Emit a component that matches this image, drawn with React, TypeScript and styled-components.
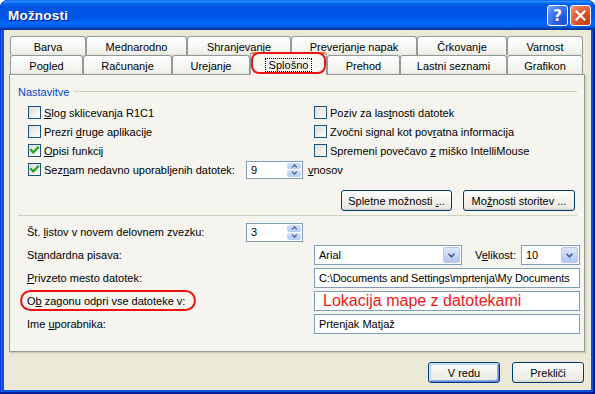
import React from 'react';
import styled, { createGlobalStyle } from 'styled-components';

const Global = createGlobalStyle`
  html, body { margin: 0; padding: 0; background: #ffffff; }
  body { font-family: "Liberation Sans", Arial, sans-serif; font-size: 11px; color: #000; }
  * { box-sizing: border-box; }
`;

const Window = styled.div`
  width: 595px;
  height: 394px;
  display: flex;
  flex-direction: column;
  background: #0855dd;
  border-radius: 8px 8px 0 0;
  overflow: hidden;
  box-shadow: inset -1px -1px #00138c, inset 1px 1px #0831d9, inset -2px -2px #001ea0, inset 2px 2px #166aee;
`;

const TitleBar = styled.div`
  height: 30px;
  flex: none;
  display: flex;
  align-items: center;
  justify-content: space-between;
  padding: 0 4px 0 8px;
  border-radius: 8px 8px 0 0;
  background: linear-gradient(180deg, #0058ee 0%, #3593ff 4%, #288eff 6%, #127dff 8%, #036ffc 10%, #0262ee 14%, #0057e5 20%, #0054e3 24%, #0055eb 56%, #005bf5 66%, #026afe 76%, #0062ef 86%, #0052d6 92%, #0040ab 94%, #003092 100%);
`;

const TitleText = styled.span`
  font-family: "Liberation Sans", Arial, sans-serif;
  font-weight: bold;
  font-size: 13.5px;
  color: #fff;
  text-shadow: 1px 1px #0f1089;
  letter-spacing: 0.2px;
`;

const Controls = styled.div`
  display: flex;
  gap: 2px;
  margin-top: 1px;
`;

const CtrlButton = styled.div<{ $kind: 'help' | 'close' }>`
  width: 21px;
  height: 21px;
  border: 1px solid #fff;
  border-radius: 3px;
  display: flex;
  align-items: center;
  justify-content: center;
  color: #fff;
  font-family: "DejaVu Sans", sans-serif;
  font-weight: bold;
  font-size: 15px;
  background: ${p => p.$kind === 'close'
    ? 'radial-gradient(circle at 85% 85%, #c73d0b 0%, #d8542a 45%, #e77b57 80%, #f1a58c 100%)'
    : 'radial-gradient(circle at 85% 85%, #1a4fd6 0%, #2c66e8 45%, #5b8ef7 80%, #8fb4fb 100%)'};
`;

const Body = styled.div`
  flex: 1;
  margin: 0 4px 4px 4px;
  background: #ece9d8;
  padding: 6px 6px 7px 5px;
  display: flex;
  flex-direction: column;
`;

const TabRow = styled.div`
  display: flex;
  height: 19px;
  padding-left: 1px;
`;

const Tab = styled.div<{ $w: number; $selected?: boolean }>`
  width: ${p => p.$w}px;
  height: ${p => (p.$selected ? 23 : 19)}px;
  margin-top: ${p => (p.$selected ? -3 : 0)}px;
  position: ${p => (p.$selected ? 'relative' : 'static')};
  z-index: ${p => (p.$selected ? 3 : 'auto')};
  border: 1px solid #919b9c;
  border-bottom: none;
  border-radius: 3px 3px 0 0;
  display: flex;
  align-items: center;
  justify-content: center;
  padding-top: ${p => (p.$selected ? 0 : 1)}px;
  background: ${p => (p.$selected
    ? '#f7f6f1'
    : 'linear-gradient(180deg, #ffffff 0%, #fafaf9 30%, #f0f0ea 90%, #e3e1d6 100%)')};
  ${p => (p.$selected ? 'border-top: 2px solid #e68b2c;' : '')}
`;

const FocusText = styled.span`
  outline: 1px dotted #000;
  padding: 0 3px;
`;

const RedRing = styled.span<{ $t: number; $r: number; $b: number; $l: number; $rad: number }>`
  position: absolute;
  top: ${p => p.$t}px;
  right: ${p => p.$r}px;
  bottom: ${p => p.$b}px;
  left: ${p => p.$l}px;
  border: 2px solid #ee1111;
  border-radius: ${p => p.$rad}px;
  pointer-events: none;
`;

const Panel = styled.div`
  height: 278px;
  border: 1px solid #919b9c;
  background: #f5f4ef;
  padding: 10px 7px 0 8px;
  display: flex;
  flex-direction: column;
  box-shadow: 1px 1px 0 #d0cebf, 2px 2px 0 #e2dfcf;
  position: relative;
  z-index: 1;
`;

const GroupHeader = styled.div`
  display: flex;
  align-items: center;
  gap: 5px;
  height: 13px;
  color: #0046d5;
  &::after {
    content: '';
    flex: 1;
    height: 1px;
    background: #d0d0bf;
  }
`;

const CheckGrid = styled.div`
  margin: 5px 0 0 10px;
  display: grid;
  grid-template-columns: 286px 1fr;
  grid-auto-rows: 19px;
`;

const CheckItem = styled.label<{ $w?: number }>`
  display: flex;
  align-items: center;
  gap: 3px;
  ${p => (p.$w ? `width: ${p.$w}px; flex: none;` : '')}
`;

const Box = styled.span`
  width: 13px;
  height: 13px;
  flex: none;
  border: 1px solid #1c5180;
  background: linear-gradient(135deg, #dcdcd7 0%, #f0f0ea 55%, #ffffff 100%);
  display: flex;
  align-items: center;
  justify-content: center;
`;

const FullRow = styled.div`
  grid-column: 1 / -1;
  display: flex;
  align-items: center;
`;

const Suffix = styled.span`
  margin-left: 5px;
`;

const U = styled.span`
  text-decoration: underline;
`;

const ButtonRow = styled.div<{ $gap: number; $mt: number; $pr: number }>`
  display: flex;
  justify-content: flex-end;
  gap: ${p => p.$gap}px;
  margin-top: ${p => p.$mt}px;
  padding-right: ${p => p.$pr}px;
`;

const Button = styled.div<{ $w: number; $default?: boolean }>`
  width: ${p => p.$w}px;
  height: 21px;
  border: 1px solid #003c74;
  border-radius: 3px;
  display: flex;
  align-items: center;
  justify-content: center;
  white-space: pre;
  background: linear-gradient(180deg, #ffffff 0%, #f4f4f0 40%, #ecebe6 86%, #d6d0c5 100%);
  box-shadow: ${p => (p.$default
    ? 'inset 1px 1px #cee7ff, inset -1px -1px #6982ee, inset 2px 2px #bcd4f6, inset -2px -2px #89ade4'
    : 'none')};
`;

const Separator = styled.div`
  height: 1px;
  background: #d0d0bf;
  margin-top: 4px;
`;

const FormGrid = styled.div`
  margin: 6px 0 0 9px;
  display: grid;
  grid-template-columns: 219px 68px 1fr;
  grid-auto-rows: 20px;
  row-gap: 3px;
`;

const FieldLabel = styled.span<{ $span?: boolean }>`
  grid-column: ${p => (p.$span ? '1 / 3' : '1 / 2')};
  align-self: center;
  position: relative;
  justify-self: start;
`;

const FieldCell = styled.div`
  grid-column: 3 / 4;
  display: flex;
  align-items: center;
`;

const SpinCell = styled.div`
  grid-column: 2 / 3;
  display: flex;
  align-items: center;
`;

const SpinBox = styled.div<{ $h: number }>`
  width: 57px;
  height: ${p => p.$h}px;
  flex: none;
  border: 1px solid #7f9db9;
  background: #fff;
  display: flex;
  align-items: stretch;
`;

const SpinValue = styled.span`
  flex: 1;
  padding-left: 4px;
  display: flex;
  align-items: center;
`;

const SpinButtons = styled.div`
  width: 16px;
  display: flex;
  flex-direction: column;
  gap: 1px;
  padding: 1px;
`;

const SpinBtn = styled.div`
  flex: 1;
  border-radius: 2px;
  background: linear-gradient(180deg, #d4defb 0%, #b9caf6 100%);
  display: flex;
  align-items: center;
  justify-content: center;
`;

const Input = styled.div<{ $w?: number; $red?: boolean; $tight?: boolean }>`
  ${p => (p.$w ? `width: ${p.$w}px; flex: none;` : 'flex: 1;')}
  height: 20px;
  border: 1px solid #7f9db9;
  background: #fff;
  display: flex;
  align-items: center;
  padding-left: ${p => (p.$red ? 8 : 4)}px;
  color: ${p => (p.$red ? '#f01818' : '#000')};
  font-size: ${p => (p.$red ? 16 : 11)}px;
  letter-spacing: ${p => (p.$tight ? '-0.12px' : 'normal')};
  white-space: nowrap;
  overflow: hidden;
`;

const ComboText = styled.span`
  flex: 1;
`;

const ComboArrow = styled.div`
  width: 17px;
  height: 16px;
  margin-right: 1px;
  border-radius: 2px;
  border: 1px solid #b8c9f5;
  background: linear-gradient(180deg, #dde6fd 0%, #c3d3fa 60%, #b2c5f4 100%);
  display: flex;
  align-items: center;
  justify-content: center;
`;

const InlineLabel = styled.span`
  margin: 0 5px 0 13px;
`;

const Check = () => (
  <svg width="11" height="11" viewBox="0 0 11 11">
    <path d="M2 5 L4.3 7.5 L9 2.5" fill="none" stroke="#21a121" strokeWidth="2.2" strokeLinecap="square" />
  </svg>
);

const Chevron = ({ up, size = 7 }: { up?: boolean; size?: number }) => (
  <svg width={size} height={Math.round(size * 0.6)} viewBox="0 0 8 5">
    <path d={up ? 'M1 4.2 L4 1.2 L7 4.2' : 'M1 0.8 L4 3.8 L7 0.8'} fill="none" stroke="#4d6185" strokeWidth="1.6" />
  </svg>
);

const Spinner = ({ value, h }: { value: string; h: number }) => (
  <SpinBox $h={h}>
    <SpinValue>{value}</SpinValue>
    <SpinButtons>
      <SpinBtn><Chevron up size={7} /></SpinBtn>
      <SpinBtn><Chevron size={7} /></SpinBtn>
    </SpinButtons>
  </SpinBox>
);

const Combo = ({ value, w }: { value: string; w: number }) => (
  <Input $w={w}>
    <ComboText>{value}</ComboText>
    <ComboArrow><Chevron size={9} /></ComboArrow>
  </Input>
);

const CheckBox = ({ checked, children, w }: { checked?: boolean; children: React.ReactNode; w?: number }) => (
  <CheckItem $w={w}>
    <Box>{checked ? <Check /> : null}</Box>
    <span>{children}</span>
  </CheckItem>
);

const row1 = [
  ['Barva', 76], ['Mednarodno', 101], ['Shranjevanje', 104], ['Preverjanje napak', 126], ['Črkovanje', 90], ['Varnost', 76],
] as const;
const row2 = [
  ['Pogled', 73], ['Računanje', 89], ['Urejanje', 78], ['Splošno', 77], ['Prehod', 73], ['Lastni seznami', 107], ['Grafikon', 76],
] as const;

export default function App() {
  return (
    <>
      <Global />
      <Window>
        <TitleBar>
          <TitleText>Možnosti</TitleText>
          <Controls>
            <CtrlButton $kind="help">?</CtrlButton>
            <CtrlButton $kind="close">
              <svg width="11" height="11" viewBox="0 0 11 11">
                <path d="M1.5 1.5 L9.5 9.5 M9.5 1.5 L1.5 9.5" stroke="#fff" strokeWidth="2.2" strokeLinecap="square" />
              </svg>
            </CtrlButton>
          </Controls>
        </TitleBar>
        <Body>
          <TabRow>
            {row1.map(([t, w]) => <Tab key={t} $w={w}>{t}</Tab>)}
          </TabRow>
          <TabRow>
            {row2.map(([t, w]) => (
              t === 'Splošno'
                ? (
                  <Tab key={t} $w={w} $selected>
                    <FocusText>{t}</FocusText>
                    <RedRing $t={-2} $r={0} $b={1} $l={0} $rad={8} />
                  </Tab>
                )
                : <Tab key={t} $w={w}>{t}</Tab>
            ))}
          </TabRow>
          <Panel>
            <GroupHeader>Nastavitve</GroupHeader>
            <CheckGrid>
              <CheckBox><U>S</U>log sklicevanja R1C1</CheckBox>
              <CheckBox>Poziv za las<U>t</U>nosti datotek</CheckBox>
              <CheckBox>Prezri <U>d</U>ruge aplikacije</CheckBox>
              <CheckBox>Zvočni signal kot pov<U>r</U>atna informacija</CheckBox>
              <CheckBox checked><U>O</U>pisi funkcij</CheckBox>
              <CheckBox>Spremeni povečavo <U>z</U> miško IntelliMouse</CheckBox>
              <FullRow>
                <CheckBox checked w={218}>Sez<U>n</U>am nedavno uporabljenih datotek:</CheckBox>
                <Spinner value="9" h={18} />
                <Suffix><U>v</U>nosov</Suffix>
              </FullRow>
            </CheckGrid>
            <ButtonRow $gap={11} $mt={11} $pr={2}>
              <Button $w={111}>{'Spletne možnosti '}<U>.</U>{'..'}</Button>
              <Button $w={112}>{'Mo'}<U>ž</U>{'nosti storitev ...'}</Button>
            </ButtonRow>
            <Separator />
            <FormGrid>
              <FieldLabel>Št. <U>l</U>istov v novem delovnem zvezku:</FieldLabel>
              <SpinCell><Spinner value="3" h={19} /></SpinCell>
              <FieldCell />

              <FieldLabel $span>St<U>a</U>ndardna pisava:</FieldLabel>
              <FieldCell>
                <Combo value="Arial" w={148} />
                <InlineLabel>V<U>e</U>likost:</InlineLabel>
                <Combo value="10" w={59} />
              </FieldCell>

              <FieldLabel $span><U>P</U>rivzeto mesto datotek:</FieldLabel>
              <FieldCell><Input $tight>{'C:\\Documents and Settings\\mprtenja\\My Documents'}</Input></FieldCell>

              <FieldLabel $span>
                O<U>b</U> zagonu odpri vse datoteke v:
                <RedRing $t={-5} $r={-11} $b={-4} $l={-7} $rad={11} />
              </FieldLabel>
              <FieldCell><Input $red>Lokacija mape z datotekami</Input></FieldCell>

              <FieldLabel $span>Ime <U>u</U>porabnika:</FieldLabel>
              <FieldCell><Input>Prtenjak Matjaž</Input></FieldCell>
            </FormGrid>
          </Panel>
          <ButtonRow $gap={12} $mt={10} $pr={1}>
            <Button $w={72} $default>V redu</Button>
            <Button $w={72}>Prekliči</Button>
          </ButtonRow>
        </Body>
      </Window>
    </>
  );
}
